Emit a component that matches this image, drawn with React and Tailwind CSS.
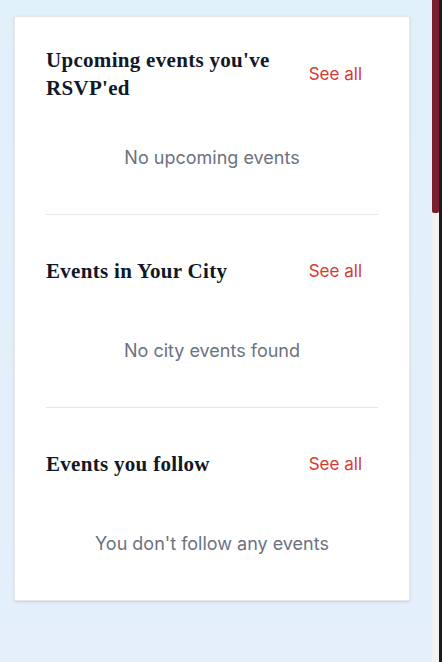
import React from "react";

const sections = [
  { title: "Upcoming events you've RSVP'ed", empty: "No upcoming events", first: true },
  { title: "Events in Your City", empty: "No city events found" },
  { title: "Events you follow", empty: "You don't follow any events", last: true },
];

function Section({ title, empty, first, last }) {
  return (
    <div className={`px-[31px] ${first ? "pt-[29px]" : "pt-8"}`}>
      <div className={last ? "" : "border-b border-[#e5e7eb]"}>
        <div className="flex items-center justify-between min-h-12">
          <h2
            className="font-bold text-[21px] leading-7 tracking-[0.3px] text-[#111827]"
            style={{ fontFamily: '"Liberation Serif", Georgia, serif' }}
          >
            {title}
          </h2>
          <button
            className="shrink-0 px-4 py-3 text-[17px] leading-6 text-[#d63a32]"
            style={{ fontFamily: 'Inter, "Liberation Sans", sans-serif' }}
          >
            See all
          </button>
        </div>
        <p
          className="text-center text-lg leading-7 text-[#6b7280] pt-[42px] pb-[42px]"
          style={{ fontFamily: 'Inter, "Liberation Sans", sans-serif' }}
        >
          {empty}
        </p>
      </div>
    </div>
  );
}

export default function App() {
  return (
    <div className="flex h-[662px] w-[442px] overflow-hidden">
      <div className="flex-1 bg-gradient-to-b from-[#e0f1fa] to-[#e4effb] pl-[14px] pt-4">
        <div className="w-[396px] bg-white border border-[#e5e7eb] shadow-sm">
          {sections.map((s) => (
            <Section key={s.title} {...s} />
          ))}
        </div>
      </div>
      <div className="w-[7px] flex flex-col bg-[#f2f2f2]">
        <div className="h-[213px] bg-[#7b1f2e] rounded-b-[2px]" />
      </div>
      <div className="w-[3px] bg-[#1c1c1e]" />
    </div>
  );
}
